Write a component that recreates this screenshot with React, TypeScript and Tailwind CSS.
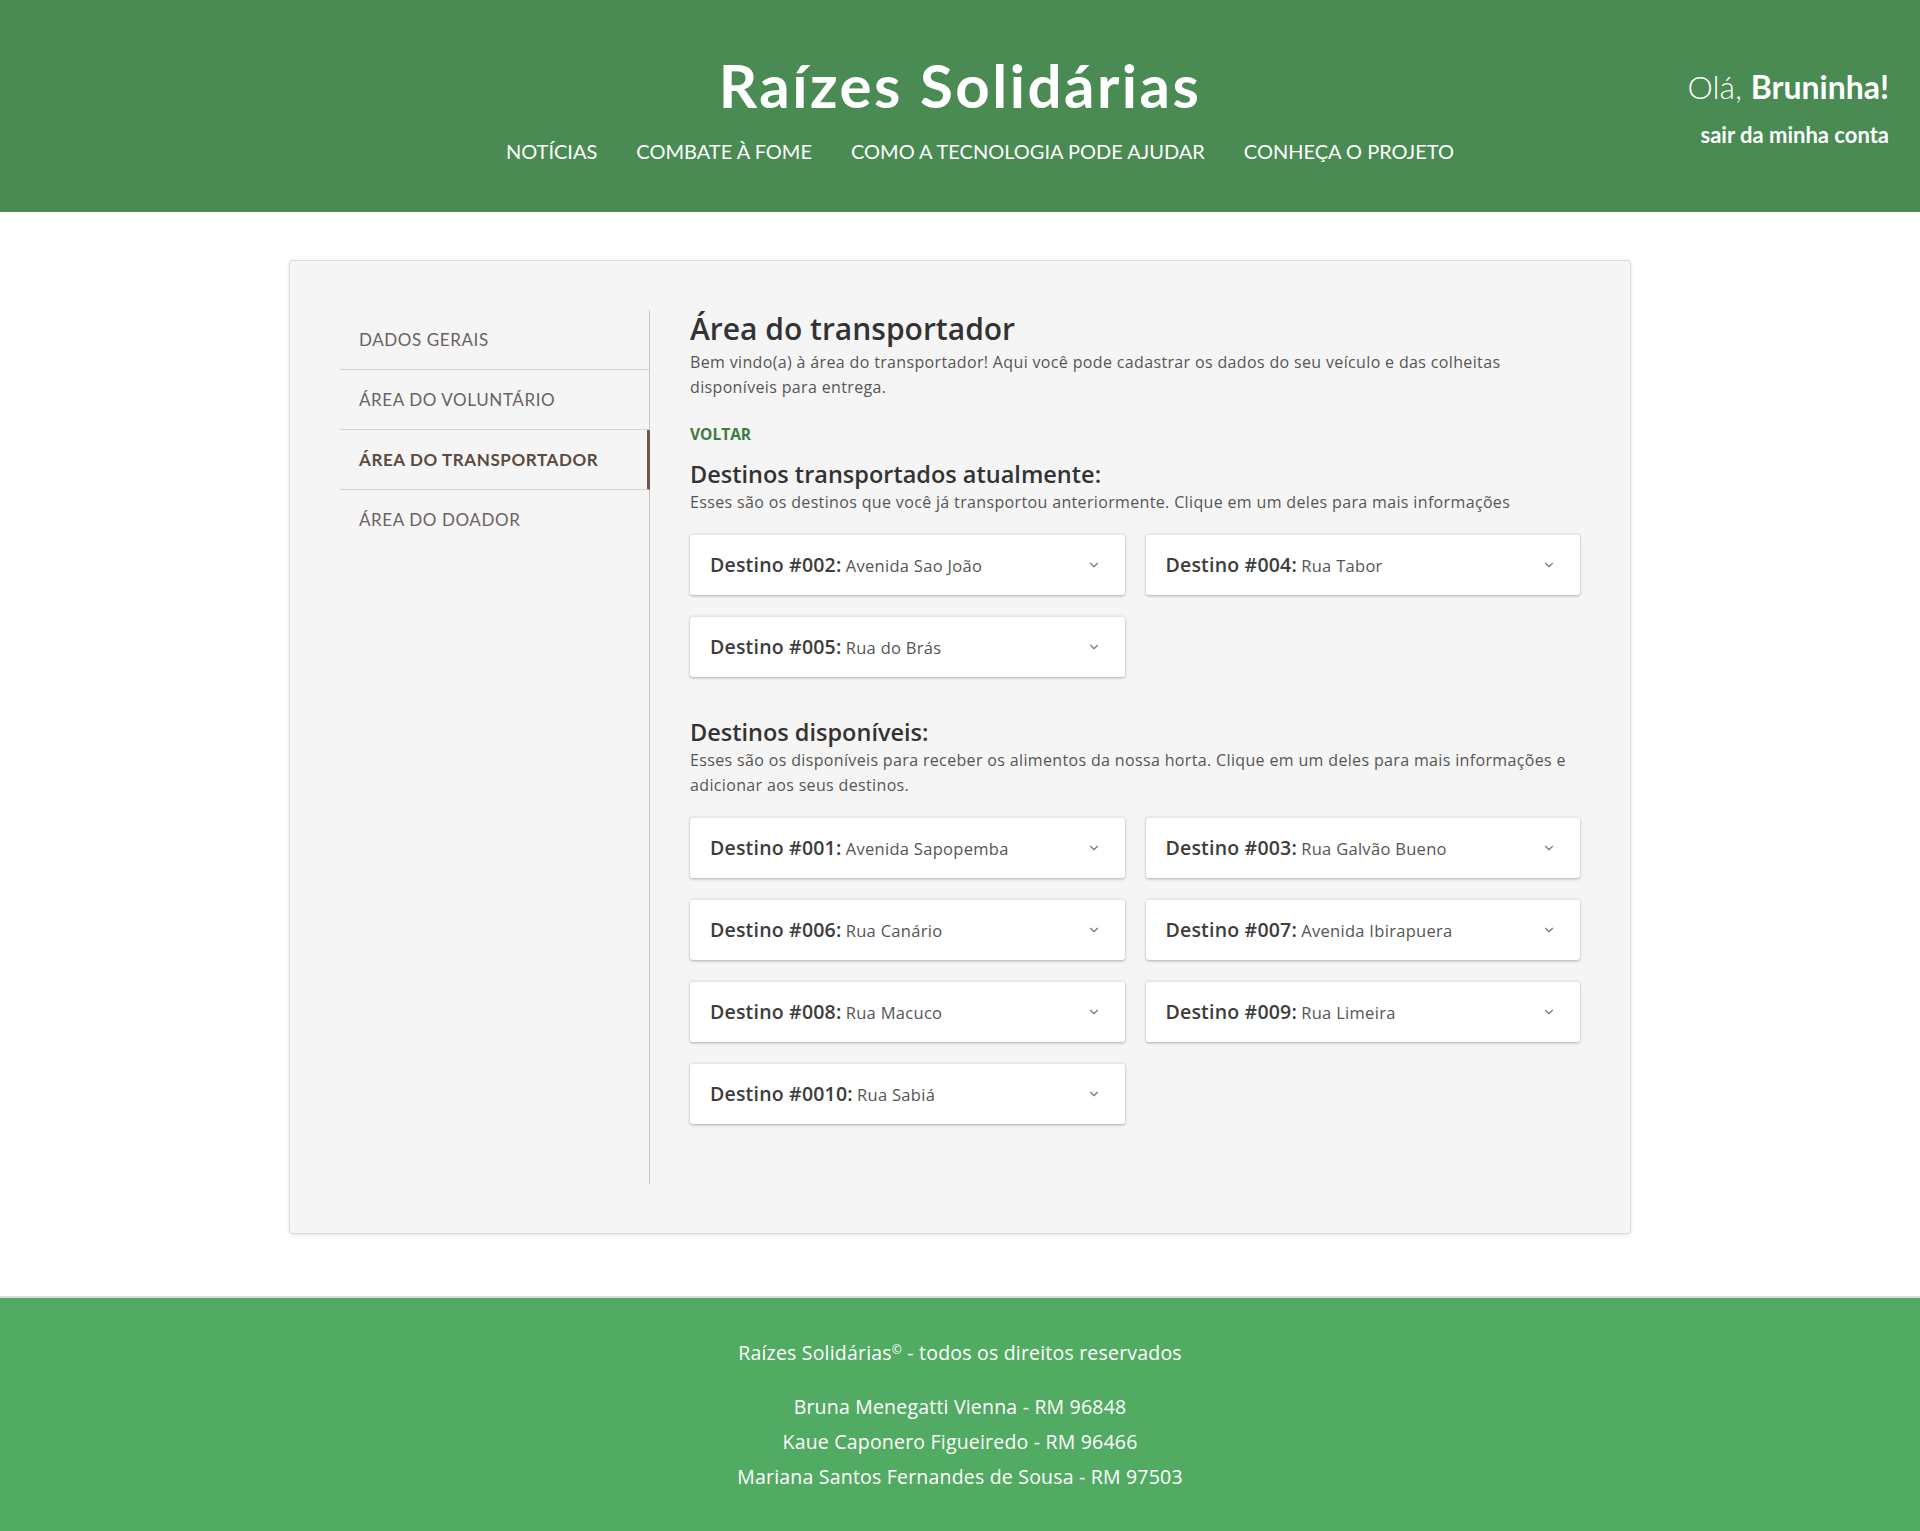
import React from "react";

const Chevron = () => (
  <svg width="14" height="14" viewBox="0 0 24 24" fill="none" stroke="#777" strokeWidth="2" strokeLinecap="round" strokeLinejoin="round">
    <path d="M6 9l6 6 6-6" />
  </svg>
);

const DestCard = ({ id, addr }: { id: string; addr: string }) => (
  <div className="flex h-[61px] items-center justify-between rounded-[3px] border-t border-[#e6e6e6] bg-white pl-5 pr-[24px] shadow-[0_1px_3px_rgba(0,0,0,0.3)]">
    <div className="text-[#3d3d3d]">
      <span className="text-[19.5px] font-semibold tracking-[0.2px]">Destino #{id}:</span>{" "}
      <span className="text-[16.5px] tracking-[0.3px] text-[#555]">{addr}</span>
    </div>
    <Chevron />
  </div>
);

const current = [
  ["002", "Avenida Sao João"],
  ["004", "Rua Tabor"],
  ["005", "Rua do Brás"],
];
const available = [
  ["001", "Avenida Sapopemba"],
  ["003", "Rua Galvão Bueno"],
  ["006", "Rua Canário"],
  ["007", "Avenida Ibirapuera"],
  ["008", "Rua Macuco"],
  ["009", "Rua Limeira"],
  ["0010", "Rua Sabiá"],
];

export default function App() {
  const lato = { fontFamily: "Lato, 'Open Sans', sans-serif" };
  const open = { fontFamily: "'Open Sans', Lato, sans-serif" };
  return (
    <div className="min-h-[1531px] bg-white" style={lato}>
      <header className="relative flex h-[212px] flex-col items-center bg-[#4a8a53] text-white">
        <h1 className="mt-[48px] text-[60px] font-bold leading-[74px] tracking-[2.5px]">Raízes Solidárias</h1>
        <nav className="ml-[40px] mt-[16px] flex gap-[39px] text-[20px] leading-[26px]">
          <a>NOTÍCIAS</a>
          <a>COMBATE À FOME</a>
          <a>COMO A TECNOLOGIA PODE AJUDAR</a>
          <a>CONHEÇA O PROJETO</a>
        </nav>
        <div className="absolute right-[31px] top-[67px] flex flex-col items-end">
          <div className="text-[32px] leading-[40px]">
            <span className="font-light">Olá, </span>
            <span className="font-bold">Bruninha!</span>
          </div>
          <div className="mt-[14px] text-[22px] font-bold leading-[28px]">sair da minha conta</div>
        </div>
      </header>

      <main className="px-[289px] pb-[62px] pt-[48px]">
        <div className="flex rounded-[4px] border border-[#dcdcdc] bg-[#f5f5f5] px-[50px] py-[49px] shadow-[0_1px_4px_rgba(0,0,0,0.12)]">
          <aside className="w-[310px] shrink-0 border-r border-[#cfc8c2]">
            {["DADOS GERAIS", "ÁREA DO VOLUNTÁRIO", "ÁREA DO TRANSPORTADOR", "ÁREA DO DOADOR"].map((t, i) => (
              <div
                key={t}
                className={
                  "flex h-[60px] items-center pl-[19px] text-[17px] tracking-[0.6px] " +
                  (i < 3 ? "border-b border-[#d4d4d4] " : "") +
                  (i === 2 ? "-mr-px border-r-[3px] border-r-[#6b5a4e] font-bold text-[#5a4a40]" : "text-[#6a6262]")
                }
              >
                {t}
              </div>
            ))}
          </aside>

          <section className="ml-[40px] min-h-[874px] flex-1" style={open}>
            <h2 className="text-[30px] font-semibold leading-[38px] text-[#333]">Área do transportador</h2>
            <p className="mt-[2px] text-[16px] leading-[25px] tracking-[0.35px] text-[#555]">
              Bem vindo(a) à área do transportador! Aqui você pode cadastrar os dados do seu veículo e das colheitas
              <br />
              disponíveis para entrega.
            </p>
            <div className="mt-[24px] text-[15.5px] font-bold leading-[20px] text-[#3c7d3e]">VOLTAR</div>

            <h3 className="mt-[15px] text-[23.5px] font-semibold leading-[30px] text-[#333]">Destinos transportados atualmente:</h3>
            <p className="mt-[1px] text-[16px] leading-[25px] tracking-[0.35px] text-[#555]">
              Esses são os destinos que você já transportou anteriormente. Clique em um deles para mais informações
            </p>
            <div className="mt-[19px] grid grid-cols-2 gap-x-[21px] gap-y-[21px]">
              {current.map(([id, a]) => (
                <DestCard key={id} id={id} addr={a} />
              ))}
            </div>

            <h3 className="mt-[40px] text-[23.5px] font-semibold leading-[30px] text-[#333]">Destinos disponíveis:</h3>
            <p className="mt-[1px] text-[16px] leading-[25px] tracking-[0.35px] text-[#555]">
              Esses são os disponíveis para receber os alimentos da nossa horta. Clique em um deles para mais informações e
              <br />
              adicionar aos seus destinos.
            </p>
            <div className="mt-[19px] grid grid-cols-2 gap-x-[21px] gap-y-[21px]">
              {available.map(([id, a]) => (
                <DestCard key={id} id={id} addr={a} />
              ))}
            </div>
          </section>
        </div>
      </main>

      <footer className="flex h-[235px] flex-col items-center border-t-2 border-[#dcdcdc] bg-[#52ab62] pt-[41px] text-[19.5px] tracking-[0.2px] text-white" style={open}>
        <div className="leading-[28px]">
          Raízes Solidárias<sup className="text-[12px]">©</sup> - todos os direitos reservados
        </div>
        <div className="mt-[22px] leading-[35px]">Bruna Menegatti Vienna - RM 96848</div>
        <div className="leading-[35px]">Kaue Caponero Figueiredo - RM 96466</div>
        <div className="leading-[35px]">Mariana Santos Fernandes de Sousa - RM 97503</div>
      </footer>
    </div>
  );
}
